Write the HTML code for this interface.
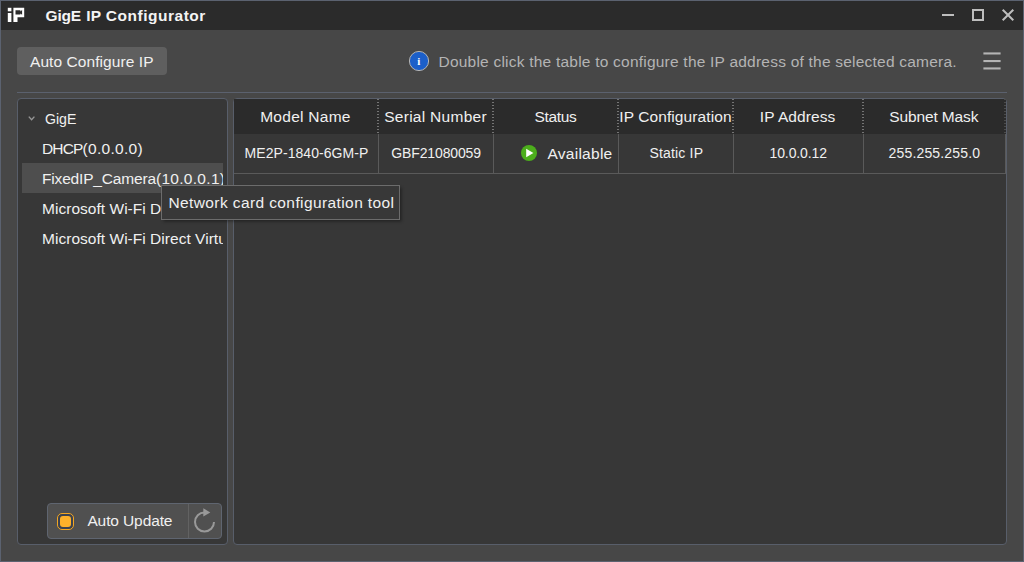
<!DOCTYPE html>
<html>
<head>
<meta charset="utf-8">
<title>GigE IP Configurator</title>
<style>
*{box-sizing:border-box;margin:0;padding:0}
html,body{width:1024px;height:562px;overflow:hidden;background:#474747}
body{font-family:"Liberation Sans",sans-serif;color:#f0f0f0;font-size:15.5px;position:relative}
.abs{position:absolute}
.t{position:absolute;white-space:nowrap;line-height:30px;height:30px}
#win{position:absolute;left:0;top:0;width:1024px;height:562px;border:1px solid #5b6270;background:#474747;overflow:hidden}
#title{position:absolute;left:1px;top:1px;width:1022px;height:29px;background:#2b2b2b}
#btn1{position:absolute;left:17px;top:47px;width:150px;height:28px;background:#5f5f5f;border-radius:4px}
#sep{position:absolute;left:17px;top:92px;width:990px;height:1px;background:#5b616e}
#lp{position:absolute;left:17px;top:98px;width:211px;height:447px;background:#373737;border:1px solid #585e6a;border-radius:4px}
#rp{position:absolute;left:233px;top:98px;width:774px;height:447px;background:#373737;border:1px solid #585e6a;border-radius:4px;overflow:hidden}
#hdr{position:absolute;left:234px;top:99px;width:772px;height:35px;background:#2b2b2b}
.vd{position:absolute;top:99px;width:2px;height:35px;margin-left:-1px;background:repeating-linear-gradient(to bottom,#747474 0,#747474 1px,transparent 1px,transparent 3px)}
.vs{position:absolute;top:134px;width:1px;height:40px;background:#5a5a5a}
#rowline{position:absolute;left:234px;top:173px;width:772px;height:1px;background:#5a5a5a}
#sel{position:absolute;left:22px;top:163px;width:201px;height:30px;background:#4e4e4e}
#clip{position:absolute;left:22px;top:103px;width:201px;height:160px;overflow:hidden}
#tip{position:absolute;left:161px;top:185px;width:239px;height:35px;background:#383838;border:1px solid #6c6c6c;border-radius:0;box-shadow:1.5px 1.5px 3px rgba(0,0,0,.4)}
#au{position:absolute;left:47px;top:503px;width:175px;height:36px;background:#505050;border:1px solid #5f6570;border-radius:4px}
#audiv{position:absolute;left:188px;top:504px;width:1px;height:34px;background:#626262}
#cb{position:absolute;left:57px;top:513px;width:17px;height:17px;border:1px solid #f2a521;border-radius:5px;background:#3b4250}
#cbi{position:absolute;left:60px;top:516px;width:11px;height:11px;border-radius:3px;background:#fdb12a}
</style>
</head>
<body>
<div id="win">
<div style="position:absolute;left:-1px;top:-1px;width:1024px;height:562px">

<div id="title"></div>
<!-- app icon -->
<svg class="abs" style="left:0;top:0" width="40" height="30" viewBox="0 0 40 30">
  <rect x="7.8" y="7.8" width="3.6" height="3.5" fill="#fff"/>
  <rect x="7.8" y="13" width="3.6" height="9" fill="#fff"/>
  <path d="M13.4 7.8H24.2V17.2H17.5V22H13.4Z" fill="#fff"/>
  <path d="M15.5 10.3H20.4V11.4L22.1 10.1V14.8L20.4 13.5V14.6H15.5Z" fill="#2b2b2b"/>
</svg>
<div class="t" style="left:45.5px;top:1px;font-weight:bold;color:#f4f4f4"><span style="letter-spacing:-0.18px">Gig</span>E<span style="letter-spacing:0.7px"> </span><span style="letter-spacing:0.32px">IP </span><span style="letter-spacing:0.52px">Configurator</span></div>
<!-- window controls -->
<svg class="abs" style="left:930px;top:0" width="94" height="30" viewBox="930 0 94 30">
  <rect x="942" y="14" width="12" height="2" fill="#bebebe"/>
  <rect x="973" y="10" width="10" height="10" fill="none" stroke="#bebebe" stroke-width="2"/>
  <path d="M1002.7 9.7L1013.3 20.3M1013.3 9.7L1002.7 20.3" stroke="#bebebe" stroke-width="2" fill="none"/>
</svg>

<!-- toolbar -->
<div id="btn1"></div>
<div class="t" style="left:30px;top:47px;letter-spacing:0.07px">Auto Configure IP</div>
<svg class="abs" style="left:405px;top:47px" width="28" height="28" viewBox="405 47 28 28">
  <circle cx="419" cy="61" r="9.6" fill="#1c5fc9" stroke="#b4b4b4" stroke-width="1"/>
  <text x="418.7" y="64.9" font-family="Liberation Serif" font-weight="bold" font-size="11" fill="#fff" text-anchor="middle">i</text>
</svg>
<div class="t" style="left:438.5px;top:47px;letter-spacing:0.22px;color:#b4b4b4">Double click the table to configure the IP address of the selected camera.</div>
<svg class="abs" style="left:980px;top:48px" width="24" height="26" viewBox="980 48 24 26">
  <rect x="983.4" y="52.4" width="17.2" height="2.1" fill="#b4b4b4"/>
  <rect x="983.4" y="60" width="17.2" height="2.1" fill="#b4b4b4"/>
  <rect x="983.4" y="67.4" width="17.2" height="2.1" fill="#b4b4b4"/>
</svg>
<div id="sep"></div>

<!-- left panel -->
<div id="lp"></div>
<div id="sel"></div>
<svg class="abs" style="left:26px;top:110px" width="14" height="14" viewBox="26 110 14 14">
  <path d="M28.8 116.6L31.6 119.8L34.4 116.6" stroke="#969696" stroke-width="1.4" fill="none"/>
</svg>
<div id="clip">
  <div class="t" style="left:23.3px;top:1px;transform:scaleX(0.911);transform-origin:0 50%">GigE</div>
  <div class="t" style="left:20px;top:31px"><span style="letter-spacing:-0.85px">DHCP</span><span style="letter-spacing:0.3px">(0.0.0.0)</span></div>
  <div class="t" style="left:20px;top:61px"><span style="letter-spacing:-0.17px">FixedIP_Camera</span><span style="letter-spacing:0.3px">(10.0.0.1)</span></div>
  <div class="t" style="left:20px;top:91px;letter-spacing:0.03px">Microsoft Wi-Fi Direct Virtual Adapter</div>
  <div class="t" style="left:20px;top:121px;letter-spacing:0.03px">Microsoft Wi-Fi Direct Virtual Adapter #2</div>
</div>

<!-- auto update -->
<div id="au"></div>
<div id="audiv"></div>
<div id="cb"></div><div id="cbi"></div>
<div class="t" style="left:87.4px;top:506px;letter-spacing:-0.11px">Auto Update</div>
<svg class="abs" style="left:190px;top:505px" width="30" height="32" viewBox="190 505 30 32">
  <path d="M214 522A9.5 9.5 0 1 1 204.5 512.5" stroke="#999" stroke-width="2" fill="none"/>
  <path d="M203.3 508.2L210.3 512.4L203.3 516.6Z" fill="#999"/>
</svg>

<!-- right panel -->
<div id="rp"></div>
<div id="hdr"></div>
<div class="vd" style="left:378px"></div>
<div class="vd" style="left:493px"></div>
<div class="vd" style="left:618px"></div>
<div class="vd" style="left:733px"></div>
<div class="vd" style="left:863px"></div>
<div class="vd" style="left:1005px;opacity:.45"></div>
<div class="vs" style="left:378px"></div>
<div class="vs" style="left:493px"></div>
<div class="vs" style="left:618px"></div>
<div class="vs" style="left:733px"></div>
<div class="vs" style="left:863px"></div>
<div class="vs" style="left:1005px"></div>
<div id="rowline"></div>

<div class="t" style="left:260.2px;top:102px;letter-spacing:0.27px">Model Name</div>
<div class="t" style="left:384.2px;top:102px;letter-spacing:0.28px">Serial Number</div>
<div class="t" style="left:534.4px;top:102px;letter-spacing:-0.31px">Status</div>
<div class="t" style="left:619.3px;top:102px;letter-spacing:0.09px">IP Configuration</div>
<div class="t" style="left:759.8px;top:102px;letter-spacing:0.09px">IP Address</div>
<div class="t" style="left:889.2px;top:102px;letter-spacing:-0.12px">Subnet Mask</div>

<div class="t" style="left:244.6px;top:138px;font-size:14px;letter-spacing:0.05px">ME2P-1840-6GM-P</div>
<div class="t" style="left:391.3px;top:138px;font-size:14px;letter-spacing:-0.13px">GBF21080059</div>
<svg class="abs" style="left:519px;top:143px" width="20" height="20" viewBox="519 143 20 20">
  <circle cx="529" cy="153" r="8" fill="#4cae1c"/>
  <path d="M526.2 148.8L533.4 153L526.2 157.2Z" fill="#fff"/>
</svg>
<div class="t" style="left:547.5px;top:139px;letter-spacing:0.26px">Available</div>
<div class="t" style="left:649.4px;top:138px;font-size:14px;letter-spacing:0.19px">Static IP</div>
<div class="t" style="left:769.5px;top:138px;font-size:14px;letter-spacing:-0.11px">10.0.0.12</div>
<div class="t" style="left:888.6px;top:138px;font-size:14px;letter-spacing:0.16px">255.255.255.0</div>

<!-- tooltip -->
<div id="tip"></div>
<div class="t" style="left:168.4px;top:188px;letter-spacing:0.4px">Network card configuration tool</div>

</div>
</div>
</body>
</html>
